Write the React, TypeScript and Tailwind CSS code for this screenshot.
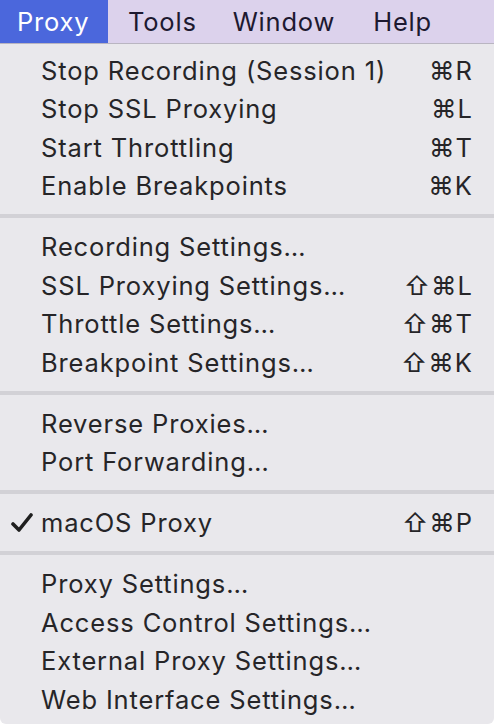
const groups: { label: string; keys?: string; checked?: boolean }[][] = [
  [
    { label: "Stop Recording (Session 1)", keys: "⌘R" },
    { label: "Stop SSL Proxying", keys: "⌘L" },
    { label: "Start Throttling", keys: "⌘T" },
    { label: "Enable Breakpoints", keys: "⌘K" },
  ],
  [
    { label: "Recording Settings…" },
    { label: "SSL Proxying Settings…", keys: "⇧⌘L" },
    { label: "Throttle Settings…", keys: "⇧⌘T" },
    { label: "Breakpoint Settings…", keys: "⇧⌘K" },
  ],
  [{ label: "Reverse Proxies…" }, { label: "Port Forwarding…" }],
  [{ label: "macOS Proxy", keys: "⇧⌘P", checked: true }],
  [
    { label: "Proxy Settings…" },
    { label: "Access Control Settings…" },
    { label: "External Proxy Settings…" },
    { label: "Web Interface Settings…" },
  ],
]

const MenuItem = ({ label, keys, checked }: { label: string; keys?: string; checked?: boolean }) => {
  return (
    <div className="flex h-[38.5px] items-center pr-[21px]">
      <div className="w-[41px] flex justify-center pl-[2px]">
        {checked && (
          <svg width="22" height="20" viewBox="0 0 22 20">
            <path d="M2 11 L8 17 L20 2" fill="none" stroke="#1f1f1f" strokeWidth="3.6" strokeLinecap="round" strokeLinejoin="round" />
          </svg>
        )}
      </div>
      <p className="flex-1 text-[#262528] tracking-[0.85px]">{label}</p>
      {keys && <p className="text-[#262528] tracking-[1px]">{keys}</p>}
    </div>
  )
}

export default function App() {
  return (
    <div className="w-[494px] h-[724px] bg-white overflow-hidden text-[25.5px] leading-none font-['Inter','DejaVu_Sans',sans-serif]">
      <div className="flex h-[44px] bg-[#dcd2ec] border-b border-[#b9b5c1] text-[#1d1930] tracking-[0.8px]">
        <div className="bg-[#4b67dc] text-white px-[17px] flex items-center w-[108px]">Proxy</div>
        <div className="pl-[20px] pr-[17px] flex items-center">Tools</div>
        <div className="px-[19px] flex items-center">Window</div>
        <div className="px-[19px] flex items-center">Help</div>
      </div>
      <div className="bg-[#e9e8ec] rounded-b-[6px] pt-[7px] pb-[6px] h-[680px]">
        {groups.map((group, i) => (
          <div key={i}>
            {i > 0 && (
              <div className="h-[22.5px] flex items-center">
                <div className="w-full h-[4px] bg-[#d2d1d6]"></div>
              </div>
            )}
            {group.map((item) => (
              <MenuItem key={item.label} {...item} />
            ))}
          </div>
        ))}
      </div>
    </div>
  )
}
